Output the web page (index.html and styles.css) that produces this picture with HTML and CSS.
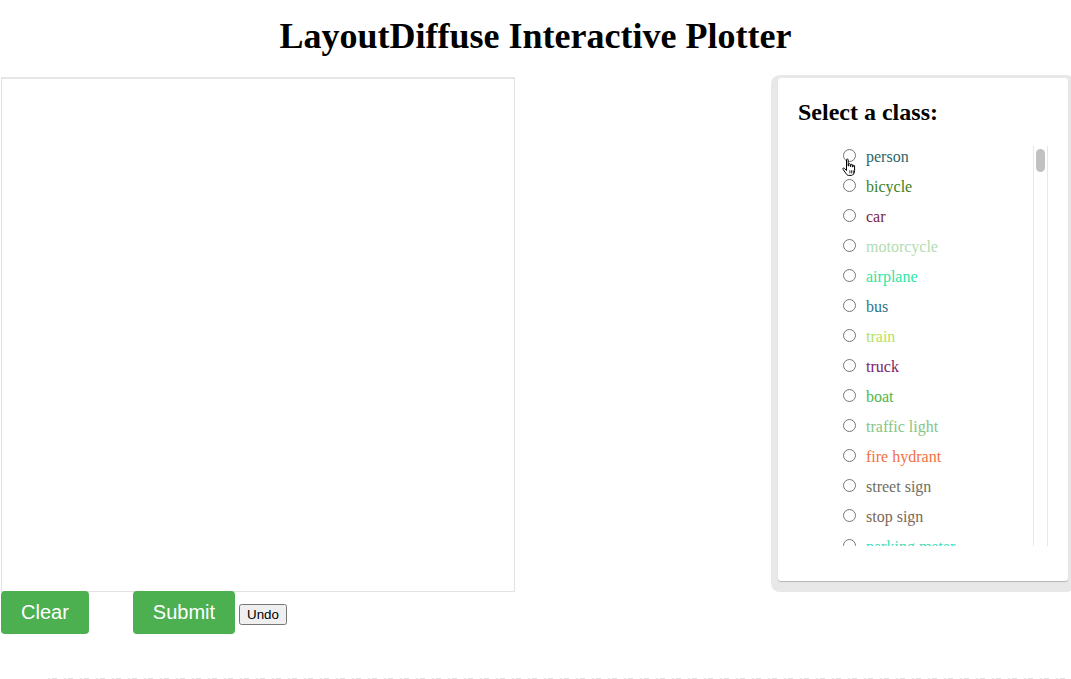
FILE: index.html
```html
<!DOCTYPE html>
<html lang="en">
<head>
<meta charset="utf-8">
<title>LayoutDiffuse Interactive Plotter</title>
<link rel="stylesheet" href="styles.css">
</head>
<body>
<h1 class="title">LayoutDiffuse Interactive Plotter</h1>
<div class="main">
  <div class="left">
    <canvas class="board" width="512" height="512"></canvas>
    <div class="actions">
      <button class="btn btn-clear">Clear</button>
      <button class="btn btn-submit">Submit</button>
      <button class="undo">Undo</button>
    </div>
  </div>
  <div class="card">
    <h2 class="card-title">Select a class:</h2>
    <div class="list-wrap">
    <ul class="classes">
      <li class="first"><label style="color:#2b6767"><input type="radio" name="cls">person</label><svg class="cursor" width="17" height="20" viewBox="0 0 17 20"><path d="M5.5 1.8c0-1 1.7-1 1.7 0V8h.5V6.4c0-1 1.7-1 1.7 0v2.1h.5V7.1c0-1 1.7-1 1.7 0V9h.4V8c0-1 1.6-1 1.6 0v4.6c0 2.6-1.5 4.8-3.2 4.8H7.6c-1.2 0-2.1-1-2.9-2.3L2 11.3c-.6-.9.6-1.8 1.4-1l2.1 2.3Z" fill="#fff" stroke="#000" stroke-width="1" stroke-linejoin="round"/><path d="M8.9 12.3v3M10.6 12.3v3M12.3 12.3v3" stroke="#000" stroke-width=".8"/></svg></li>
      <li><label style="color:#3d7f25"><input type="radio" name="cls">bicycle</label></li>
      <li><label style="color:#7b1f3d"><input type="radio" name="cls">car</label></li>
      <li><label style="color:#b3dcb3"><input type="radio" name="cls">motorcycle</label></li>
      <li><label style="color:#2fe6a3"><input type="radio" name="cls">airplane</label></li>
      <li><label style="color:#2b7686"><input type="radio" name="cls">bus</label></li>
      <li><label style="color:#b6e25c"><input type="radio" name="cls">train</label></li>
      <li><label style="color:#7d1b6b"><input type="radio" name="cls">truck</label></li>
      <li><label style="color:#4cb84a"><input type="radio" name="cls">boat</label></li>
      <li><label style="color:#86c586"><input type="radio" name="cls">traffic light</label></li>
      <li><label style="color:#f2703f"><input type="radio" name="cls">fire hydrant</label></li>
      <li><label style="color:#6f6e5e"><input type="radio" name="cls">street sign</label></li>
      <li><label style="color:#7c6756"><input type="radio" name="cls">stop sign</label></li>
      <li><label style="color:#3fdcbc"><input type="radio" name="cls">parking meter</label></li>
      <li><label style="color:#5b8c3a"><input type="radio" name="cls">bench</label></li>
      <li><label style="color:#a0522d"><input type="radio" name="cls">bird</label></li>
      <li><label style="color:#3a6fb0"><input type="radio" name="cls">cat</label></li>
      <li><label style="color:#c04080"><input type="radio" name="cls">dog</label></li>
      <li><label style="color:#6a5acd"><input type="radio" name="cls">horse</label></li>
      <li><label style="color:#2e8b57"><input type="radio" name="cls">sheep</label></li>
      <li><label style="color:#d2691e"><input type="radio" name="cls">cow</label></li>
      <li><label style="color:#708090"><input type="radio" name="cls">elephant</label></li>
      <li><label style="color:#b8860b"><input type="radio" name="cls">bear</label></li>
      <li><label style="color:#4682b4"><input type="radio" name="cls">zebra</label></li>
      <li><label style="color:#8b4513"><input type="radio" name="cls">giraffe</label></li>
      <li><label style="color:#9acd32"><input type="radio" name="cls">hat</label></li>
      <li><label style="color:#20b2aa"><input type="radio" name="cls">backpack</label></li>
      <li><label style="color:#cd5c5c"><input type="radio" name="cls">umbrella</label></li>
      <li><label style="color:#778899"><input type="radio" name="cls">shoe</label></li>
      <li><label style="color:#bc8f8f"><input type="radio" name="cls">eye glasses</label></li>
      <li><label style="color:#66cdaa"><input type="radio" name="cls">handbag</label></li>
      <li><label style="color:#da70d6"><input type="radio" name="cls">tie</label></li>
      <li><label style="color:#8fbc8f"><input type="radio" name="cls">suitcase</label></li>
      <li><label style="color:#b22222"><input type="radio" name="cls">frisbee</label></li>
      <li><label style="color:#5b8c3a"><input type="radio" name="cls">skis</label></li>
      <li><label style="color:#a0522d"><input type="radio" name="cls">snowboard</label></li>
      <li><label style="color:#3a6fb0"><input type="radio" name="cls">sports ball</label></li>
      <li><label style="color:#c04080"><input type="radio" name="cls">kite</label></li>
      <li><label style="color:#6a5acd"><input type="radio" name="cls">baseball bat</label></li>
      <li><label style="color:#2e8b57"><input type="radio" name="cls">baseball glove</label></li>
      <li><label style="color:#d2691e"><input type="radio" name="cls">skateboard</label></li>
      <li><label style="color:#708090"><input type="radio" name="cls">surfboard</label></li>
      <li><label style="color:#b8860b"><input type="radio" name="cls">tennis racket</label></li>
      <li><label style="color:#4682b4"><input type="radio" name="cls">bottle</label></li>
      <li><label style="color:#8b4513"><input type="radio" name="cls">plate</label></li>
      <li><label style="color:#9acd32"><input type="radio" name="cls">wine glass</label></li>
      <li><label style="color:#20b2aa"><input type="radio" name="cls">cup</label></li>
      <li><label style="color:#cd5c5c"><input type="radio" name="cls">fork</label></li>
      <li><label style="color:#778899"><input type="radio" name="cls">knife</label></li>
      <li><label style="color:#bc8f8f"><input type="radio" name="cls">spoon</label></li>
      <li><label style="color:#66cdaa"><input type="radio" name="cls">bowl</label></li>
      <li><label style="color:#da70d6"><input type="radio" name="cls">banana</label></li>
      <li><label style="color:#8fbc8f"><input type="radio" name="cls">apple</label></li>
      <li><label style="color:#b22222"><input type="radio" name="cls">sandwich</label></li>
      <li><label style="color:#5b8c3a"><input type="radio" name="cls">orange</label></li>
      <li><label style="color:#a0522d"><input type="radio" name="cls">broccoli</label></li>
      <li><label style="color:#3a6fb0"><input type="radio" name="cls">carrot</label></li>
      <li><label style="color:#c04080"><input type="radio" name="cls">hot dog</label></li>
      <li><label style="color:#6a5acd"><input type="radio" name="cls">pizza</label></li>
      <li><label style="color:#2e8b57"><input type="radio" name="cls">donut</label></li>
      <li><label style="color:#d2691e"><input type="radio" name="cls">cake</label></li>
      <li><label style="color:#708090"><input type="radio" name="cls">chair</label></li>
      <li><label style="color:#b8860b"><input type="radio" name="cls">couch</label></li>
      <li><label style="color:#4682b4"><input type="radio" name="cls">potted plant</label></li>
      <li><label style="color:#8b4513"><input type="radio" name="cls">bed</label></li>
      <li><label style="color:#9acd32"><input type="radio" name="cls">mirror</label></li>
      <li><label style="color:#20b2aa"><input type="radio" name="cls">dining table</label></li>
      <li><label style="color:#cd5c5c"><input type="radio" name="cls">window</label></li>
      <li><label style="color:#778899"><input type="radio" name="cls">desk</label></li>
      <li><label style="color:#bc8f8f"><input type="radio" name="cls">toilet</label></li>
      <li><label style="color:#66cdaa"><input type="radio" name="cls">door</label></li>
      <li><label style="color:#da70d6"><input type="radio" name="cls">tv</label></li>
      <li><label style="color:#8fbc8f"><input type="radio" name="cls">laptop</label></li>
      <li><label style="color:#b22222"><input type="radio" name="cls">mouse</label></li>
      <li><label style="color:#5b8c3a"><input type="radio" name="cls">remote</label></li>
      <li><label style="color:#a0522d"><input type="radio" name="cls">keyboard</label></li>
      <li><label style="color:#3a6fb0"><input type="radio" name="cls">cell phone</label></li>
      <li><label style="color:#c04080"><input type="radio" name="cls">microwave</label></li>
      <li><label style="color:#6a5acd"><input type="radio" name="cls">oven</label></li>
      <li><label style="color:#2e8b57"><input type="radio" name="cls">toaster</label></li>
      <li><label style="color:#d2691e"><input type="radio" name="cls">sink</label></li>
      <li><label style="color:#708090"><input type="radio" name="cls">refrigerator</label></li>
      <li><label style="color:#b8860b"><input type="radio" name="cls">blender</label></li>
      <li><label style="color:#4682b4"><input type="radio" name="cls">book</label></li>
      <li><label style="color:#8b4513"><input type="radio" name="cls">clock</label></li>
      <li><label style="color:#9acd32"><input type="radio" name="cls">vase</label></li>
      <li><label style="color:#20b2aa"><input type="radio" name="cls">scissors</label></li>
      <li><label style="color:#cd5c5c"><input type="radio" name="cls">teddy bear</label></li>
      <li><label style="color:#778899"><input type="radio" name="cls">hair drier</label></li>
      <li><label style="color:#bc8f8f"><input type="radio" name="cls">toothbrush</label></li>
      <li><label style="color:#66cdaa"><input type="radio" name="cls">hair brush</label></li>
      <li><label style="color:#da70d6"><input type="radio" name="cls">banner</label></li>
      <li><label style="color:#8fbc8f"><input type="radio" name="cls">blanket</label></li>
      <li><label style="color:#b22222"><input type="radio" name="cls">branch</label></li>
      <li><label style="color:#5b8c3a"><input type="radio" name="cls">bridge</label></li>
      <li><label style="color:#a0522d"><input type="radio" name="cls">building-other</label></li>
      <li><label style="color:#3a6fb0"><input type="radio" name="cls">bush</label></li>
      <li><label style="color:#c04080"><input type="radio" name="cls">cabinet</label></li>
      <li><label style="color:#6a5acd"><input type="radio" name="cls">cage</label></li>
      <li><label style="color:#2e8b57"><input type="radio" name="cls">cardboard</label></li>
      <li><label style="color:#d2691e"><input type="radio" name="cls">carpet</label></li>
      <li><label style="color:#708090"><input type="radio" name="cls">ceiling-other</label></li>
      <li><label style="color:#b8860b"><input type="radio" name="cls">ceiling-tile</label></li>
      <li><label style="color:#4682b4"><input type="radio" name="cls">cloth</label></li>
      <li><label style="color:#8b4513"><input type="radio" name="cls">clothes</label></li>
      <li><label style="color:#9acd32"><input type="radio" name="cls">clouds</label></li>
      <li><label style="color:#20b2aa"><input type="radio" name="cls">counter</label></li>
      <li><label style="color:#cd5c5c"><input type="radio" name="cls">cupboard</label></li>
      <li><label style="color:#778899"><input type="radio" name="cls">curtain</label></li>
      <li><label style="color:#bc8f8f"><input type="radio" name="cls">desk-stuff</label></li>
      <li><label style="color:#66cdaa"><input type="radio" name="cls">dirt</label></li>
      <li><label style="color:#da70d6"><input type="radio" name="cls">door-stuff</label></li>
      <li><label style="color:#8fbc8f"><input type="radio" name="cls">fence</label></li>
      <li><label style="color:#b22222"><input type="radio" name="cls">floor-marble</label></li>
      <li><label style="color:#5b8c3a"><input type="radio" name="cls">floor-other</label></li>
      <li><label style="color:#a0522d"><input type="radio" name="cls">floor-stone</label></li>
      <li><label style="color:#3a6fb0"><input type="radio" name="cls">floor-tile</label></li>
      <li><label style="color:#c04080"><input type="radio" name="cls">floor-wood</label></li>
      <li><label style="color:#6a5acd"><input type="radio" name="cls">flower</label></li>
      <li><label style="color:#2e8b57"><input type="radio" name="cls">fog</label></li>
      <li><label style="color:#d2691e"><input type="radio" name="cls">food-other</label></li>
      <li><label style="color:#708090"><input type="radio" name="cls">fruit</label></li>
      <li><label style="color:#b8860b"><input type="radio" name="cls">furniture-other</label></li>
      <li><label style="color:#4682b4"><input type="radio" name="cls">grass</label></li>
      <li><label style="color:#8b4513"><input type="radio" name="cls">gravel</label></li>
      <li><label style="color:#9acd32"><input type="radio" name="cls">ground-other</label></li>
      <li><label style="color:#20b2aa"><input type="radio" name="cls">hill</label></li>
      <li><label style="color:#cd5c5c"><input type="radio" name="cls">house</label></li>
      <li><label style="color:#778899"><input type="radio" name="cls">leaves</label></li>
      <li><label style="color:#bc8f8f"><input type="radio" name="cls">light</label></li>
      <li><label style="color:#66cdaa"><input type="radio" name="cls">mat</label></li>
      <li><label style="color:#da70d6"><input type="radio" name="cls">metal</label></li>
      <li><label style="color:#8fbc8f"><input type="radio" name="cls">mirror-stuff</label></li>
      <li><label style="color:#b22222"><input type="radio" name="cls">moss</label></li>
      <li><label style="color:#5b8c3a"><input type="radio" name="cls">mountain</label></li>
      <li><label style="color:#a0522d"><input type="radio" name="cls">mud</label></li>
      <li><label style="color:#3a6fb0"><input type="radio" name="cls">napkin</label></li>
      <li><label style="color:#c04080"><input type="radio" name="cls">net</label></li>
      <li><label style="color:#6a5acd"><input type="radio" name="cls">paper</label></li>
      <li><label style="color:#2e8b57"><input type="radio" name="cls">pavement</label></li>
      <li><label style="color:#d2691e"><input type="radio" name="cls">pillow</label></li>
      <li><label style="color:#708090"><input type="radio" name="cls">plant-other</label></li>
      <li><label style="color:#b8860b"><input type="radio" name="cls">plastic</label></li>
      <li><label style="color:#4682b4"><input type="radio" name="cls">platform</label></li>
      <li><label style="color:#8b4513"><input type="radio" name="cls">playingfield</label></li>
      <li><label style="color:#9acd32"><input type="radio" name="cls">railing</label></li>
      <li><label style="color:#20b2aa"><input type="radio" name="cls">railroad</label></li>
      <li><label style="color:#cd5c5c"><input type="radio" name="cls">river</label></li>
      <li><label style="color:#778899"><input type="radio" name="cls">road</label></li>
      <li><label style="color:#bc8f8f"><input type="radio" name="cls">rock</label></li>
      <li><label style="color:#66cdaa"><input type="radio" name="cls">roof</label></li>
      <li><label style="color:#da70d6"><input type="radio" name="cls">rug</label></li>
      <li><label style="color:#8fbc8f"><input type="radio" name="cls">salad</label></li>
      <li><label style="color:#b22222"><input type="radio" name="cls">sand</label></li>
      <li><label style="color:#5b8c3a"><input type="radio" name="cls">sea</label></li>
      <li><label style="color:#a0522d"><input type="radio" name="cls">shelf</label></li>
      <li><label style="color:#3a6fb0"><input type="radio" name="cls">sky-other</label></li>
      <li><label style="color:#c04080"><input type="radio" name="cls">skyscraper</label></li>
      <li><label style="color:#6a5acd"><input type="radio" name="cls">snow</label></li>
      <li><label style="color:#2e8b57"><input type="radio" name="cls">solid-other</label></li>
      <li><label style="color:#d2691e"><input type="radio" name="cls">stairs</label></li>
      <li><label style="color:#708090"><input type="radio" name="cls">stone</label></li>
      <li><label style="color:#b8860b"><input type="radio" name="cls">straw</label></li>
      <li><label style="color:#4682b4"><input type="radio" name="cls">structural-other</label></li>
      <li><label style="color:#8b4513"><input type="radio" name="cls">table</label></li>
      <li><label style="color:#9acd32"><input type="radio" name="cls">tent</label></li>
      <li><label style="color:#20b2aa"><input type="radio" name="cls">textile-other</label></li>
      <li><label style="color:#cd5c5c"><input type="radio" name="cls">towel</label></li>
      <li><label style="color:#778899"><input type="radio" name="cls">tree</label></li>
      <li><label style="color:#bc8f8f"><input type="radio" name="cls">vegetable</label></li>
      <li><label style="color:#66cdaa"><input type="radio" name="cls">wall-brick</label></li>
      <li><label style="color:#da70d6"><input type="radio" name="cls">wall-concrete</label></li>
      <li><label style="color:#8fbc8f"><input type="radio" name="cls">wall-other</label></li>
      <li><label style="color:#b22222"><input type="radio" name="cls">wall-panel</label></li>
      <li><label style="color:#5b8c3a"><input type="radio" name="cls">wall-stone</label></li>
      <li><label style="color:#a0522d"><input type="radio" name="cls">wall-tile</label></li>
      <li><label style="color:#3a6fb0"><input type="radio" name="cls">wall-wood</label></li>
      <li><label style="color:#c04080"><input type="radio" name="cls">water-other</label></li>
      <li><label style="color:#6a5acd"><input type="radio" name="cls">waterdrops</label></li>
      <li><label style="color:#2e8b57"><input type="radio" name="cls">window-blind</label></li>
      <li><label style="color:#d2691e"><input type="radio" name="cls">window-other</label></li>
      <li><label style="color:#708090"><input type="radio" name="cls">wood</label></li>
    </ul>
    <div class="scrollbar"><div class="thumb"></div></div>
    </div>
  </div>
</div>
<div class="divider"></div>
</body>
</html>
```
FILE: styles.css
```css
html, body {
  margin: 0;
  padding: 0;
  background: #ffffff;
}

body {
  font-family: "Liberation Serif", "Times New Roman", serif;
  font-size: 16px;
  color: #000000;
  overflow: hidden;
}

.title {
  margin: 16px 0 21px;
  font-size: 36px;
  line-height: 40px;
  font-weight: bold;
  text-align: center;
}

.main {
  display: flex;
  justify-content: space-between;
  align-items: flex-start;
}

.left {
  display: flex;
  flex-direction: column;
  align-items: flex-start;
}

.board {
  display: block;
  margin-left: 1px;
  width: 512px;
  height: 512px;
  border: 1px solid #e2e2e2;
  border-top-width: 2px;
  border-top-color: #e6e6e6;
  background: #ffffff;
}

.actions {
  display: flex;
  align-items: baseline;
  margin-left: 1px;
  margin-top: -1px;
}

.btn {
  font-family: "Liberation Sans", Arial, sans-serif;
  font-size: 20px;
  line-height: 23px;
  color: #ffffff;
  background: #4caf50;
  border: none;
  border-radius: 4px;
  padding: 10px 20px;
  cursor: pointer;
}

.btn-clear {
  margin-right: 44px;
}

.btn-submit {
  margin-right: 4px;
}

.undo {
  font-family: "Liberation Sans", Arial, sans-serif;
  font-size: 13.333px;
  padding: 1px 6px;
}

.card {
  width: 250px;
  height: 463px;
  padding: 20px;
  margin-top: 1px;
  margin-right: 3px;
  background: #ffffff;
  border-radius: 3px;
  box-shadow: 0 1px 1px rgba(0, 0, 0, 0.22), 0 4px 0 7px #e8e8e8;
}

.card-title {
  margin: 0 0 20px;
  font-size: 24px;
  line-height: 28px;
  font-weight: bold;
}

.list-wrap {
  position: relative;
}

.classes {
  list-style: none;
  margin: 0;
  padding: 0 0 0 40px;
  height: 400px;
  overflow-y: scroll;
  scrollbar-width: none;
}

.classes::-webkit-scrollbar {
  display: none;
}

.scrollbar {
  position: absolute;
  top: 0;
  right: 0;
  width: 15px;
  height: 400px;
  box-sizing: border-box;
  border-left: 1px solid #e8e8e8;
  border-right: 1px solid #e8e8e8;
  background: #ffffff;
  padding: 3px 2px 0;
}

.thumb {
  height: 23px;
  background: #c1c1c1;
  border-radius: 5px;
}

.classes li {
  position: relative;
  height: 30px;
  white-space: nowrap;
}

.classes input {
  width: 13px;
  height: 13px;
  margin: 3px 10px 0 5px;
  vertical-align: baseline;
}

.cursor {
  position: absolute;
  left: 3px;
  top: 12px;
}

.divider {
  margin: 44px 0 0 48px;
  height: 1px;
  background: repeating-linear-gradient(90deg, #e2e2e2 0 2px, transparent 2px 4px, #e2e2e2 4px 9px, transparent 9px 16px);
}
```
